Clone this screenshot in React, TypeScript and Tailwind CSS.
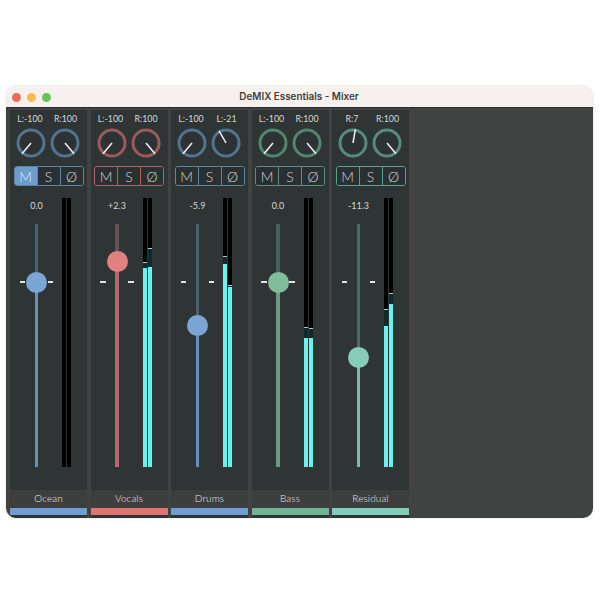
const channels = [
  {
    name: "Ocean", left: "L:-100", right: "R:100", knobs: [-100, 100], value: "0.0", thumbY: 282,
    ring: "border-[#5f85a5]", divide: "divide-[#5f85a5]", stroke: "#52748f", dim: "bg-[#4b6070]", bright: "bg-[#6590ba]", thumb: "bg-[#7ba6d4]", bar: "bg-[#6f9fd2]",
    meters: [null, null],
  },
  {
    name: "Vocals", left: "L:-100", right: "R:100", knobs: [-100, 100], value: "+2.3", thumbY: 261,
    ring: "border-[#b06165]", divide: "divide-[#b06165]", stroke: "#9c5a5d", dim: "bg-[#6a5254]", bright: "bg-[#bd6569]", thumb: "bg-[#e38080]", bar: "bg-[#dd7573]",
    meters: [{ peak: 262, fill: 268 }, { peak: 248, fill: 267 }],
  },
  {
    name: "Drums", left: "L:-100", right: "L:-21", knobs: [-100, -21], value: "-5.9", thumbY: 325,
    ring: "border-[#5f85a5]", divide: "divide-[#5f85a5]", stroke: "#52748f", dim: "bg-[#4b6070]", bright: "bg-[#6590ba]", thumb: "bg-[#7ba6d4]", bar: "bg-[#6f9fd2]",
    meters: [{ peak: 256, fill: 264 }, { peak: 285, fill: 287 }],
  },
  {
    name: "Bass", left: "L:-100", right: "R:100", knobs: [-100, 100], value: "0.0", thumbY: 282,
    ring: "border-[#5a9278]", divide: "divide-[#5a9278]", stroke: "#52866d", dim: "bg-[#46605a]", bright: "bg-[#669e82]", thumb: "bg-[#7fbd9b]", bar: "bg-[#6fb593]",
    meters: [{ peak: 327, fill: 338 }, { peak: 328, fill: 338 }],
  },
  {
    name: "Residual", left: "R:7", right: "R:100", knobs: [7, 100], value: "-11.3", thumbY: 357,
    ring: "border-[#5f9e8b]", divide: "divide-[#5f9e8b]", stroke: "#568c7b", dim: "bg-[#4f6a65]", bright: "bg-[#7dbcaa]", thumb: "bg-[#85cdb8]", bar: "bg-[#82cdb9]",
    meters: [{ peak: 309, fill: 326 }, { peak: 293, fill: 304 }],
  },
];

const FADER_TOP = 224;
const FADER_BOTTOM = 467;

function Knob({ value, stroke }: { value: number; stroke: string }) {
  // -100..100 sweeps 280 degrees, 0 is straight up
  const a = (value * 1.4 * Math.PI) / 180;
  return (
    <svg width="30" height="30" viewBox="0 0 30 30" className="block">
      <circle cx="15" cy="15" r="13" fill="#2d3234" stroke={stroke} strokeWidth="3" />
      <line x1="15" y1="15" x2={15 + 14 * Math.sin(a)} y2={15 - 14 * Math.cos(a)} stroke="#f2f2f2" strokeWidth="1.5" />
    </svg>
  );
}

function MeterBar({ level }: { level: { peak: number; fill: number } | null }) {
  return (
    <div className="flex w-[4px] flex-col justify-end bg-black">
      {level && (
        <>
          <div className="h-px shrink-0 bg-[#b9c6c6]" />
          <div className="shrink-0 bg-[#0f2a2c]" style={{ height: level.fill - level.peak - 1 }} />
          <div className="shrink-0 bg-[#68f3f0]" style={{ height: FADER_BOTTOM - level.fill }} />
        </>
      )}
    </div>
  );
}

function Strip({ ch, active }: { ch: (typeof channels)[number]; active: boolean }) {
  return (
    <div className="flex w-[77px] flex-col bg-[#2f3435]">
      <div className="mt-[3px] flex h-[12px] items-center text-[8.8px] leading-none text-[#d6d8d8]">
        <span className="w-[37px] pl-[3px] text-center">{ch.left}</span>
        <span className="w-[37px] text-center">{ch.right}</span>
      </div>
      <div className="mt-[3px] flex justify-between pl-[6px] pr-[7px]">
        <Knob value={ch.knobs[0]} stroke={ch.stroke} />
        <Knob value={ch.knobs[1]} stroke={ch.stroke} />
      </div>
      <div className={`mx-[3.5px] mt-[8px] flex h-[20px] divide-x-[1.5px] overflow-hidden rounded-[3px] border-[1.5px] text-[14px] font-light text-[#d0d3d3] ${ch.ring} ${ch.divide}`}>
        <div className={`flex flex-1 items-center justify-center ${active ? "bg-[#6d9bcb] text-[#dfe9f3]" : "bg-[#2a2f32]"}`}>M</div>
        <div className="flex flex-1 items-center justify-center bg-[#2a2f32]">S</div>
        <div className="flex flex-1 items-center justify-center bg-[#2a2f32]">Ø</div>
      </div>
      <div className="mt-[12px] flex h-[269px]">
        <div className="-mr-[1px] flex w-[53px] flex-col items-center">
          <div className="flex h-[16px] items-center text-[9px] text-[#d6d8d8]">{ch.value}</div>
          <div className={`relative mt-[10px] w-[3.5px] flex-1 ${ch.dim}`}>
            <div className={`absolute inset-x-0 bottom-0 ${ch.bright}`} style={{ height: FADER_BOTTOM - ch.thumbY }} />
            <div className="absolute left-[-15px] top-[57px] h-[1.5px] w-[5.5px] bg-[#e4e4e4]" />
            <div className="absolute right-[-15px] top-[57px] h-[1.5px] w-[5.5px] bg-[#e4e4e4]" />
            <div className={`absolute left-[-8.75px] h-[21px] w-[21px] rounded-full ${ch.thumb}`} style={{ top: ch.thumbY - FADER_TOP - 10.5 }} />
          </div>
        </div>
        <div className="flex gap-px">
          <MeterBar level={ch.meters[0]} />
          <MeterBar level={ch.meters[1]} />
        </div>
      </div>
      <div className="mt-[23px] flex h-[17.5px] items-center justify-center bg-[#3d3e3e] text-[10px] font-light tracking-[0.1px] text-[#e6e8e8]">{ch.name}</div>
      <div className={`mt-[0.5px] h-[7px] ${ch.bar}`} />
    </div>
  );
}

export default function App() {
  return (
    <div className="h-[600px] bg-white pl-[6px] pt-[86px] font-['Lato',sans-serif]">
      <div className="flex h-[432px] w-[587px] flex-col overflow-hidden rounded-[10px] shadow-[0_0_2px_rgba(0,0,0,0.2)]">
        <div className="relative flex h-[21px] items-center justify-center bg-[#f6f1ef]">
          <div className="absolute left-[6px] top-[6.5px] flex gap-[6px]">
            <span className="h-[9px] w-[9px] rounded-full bg-[#ee6a5e]" />
            <span className="h-[9px] w-[9px] rounded-full bg-[#f5bd4f]" />
            <span className="h-[9px] w-[9px] rounded-full bg-[#61c554]" />
          </div>
          <span className="-ml-[1px] font-['Inter',sans-serif] text-[9.9px] font-semibold text-[#3f3f3f]">DeMIX Essentials - Mixer</span>
        </div>
        <div className="flex flex-1 gap-[3.5px] border-t border-[#2d2f2e] bg-[#414342] pl-[4px] pt-[2px]">
          {channels.map((ch, i) => (
            <Strip key={ch.name} ch={ch} active={i === 0} />
          ))}
        </div>
      </div>
    </div>
  );
}
